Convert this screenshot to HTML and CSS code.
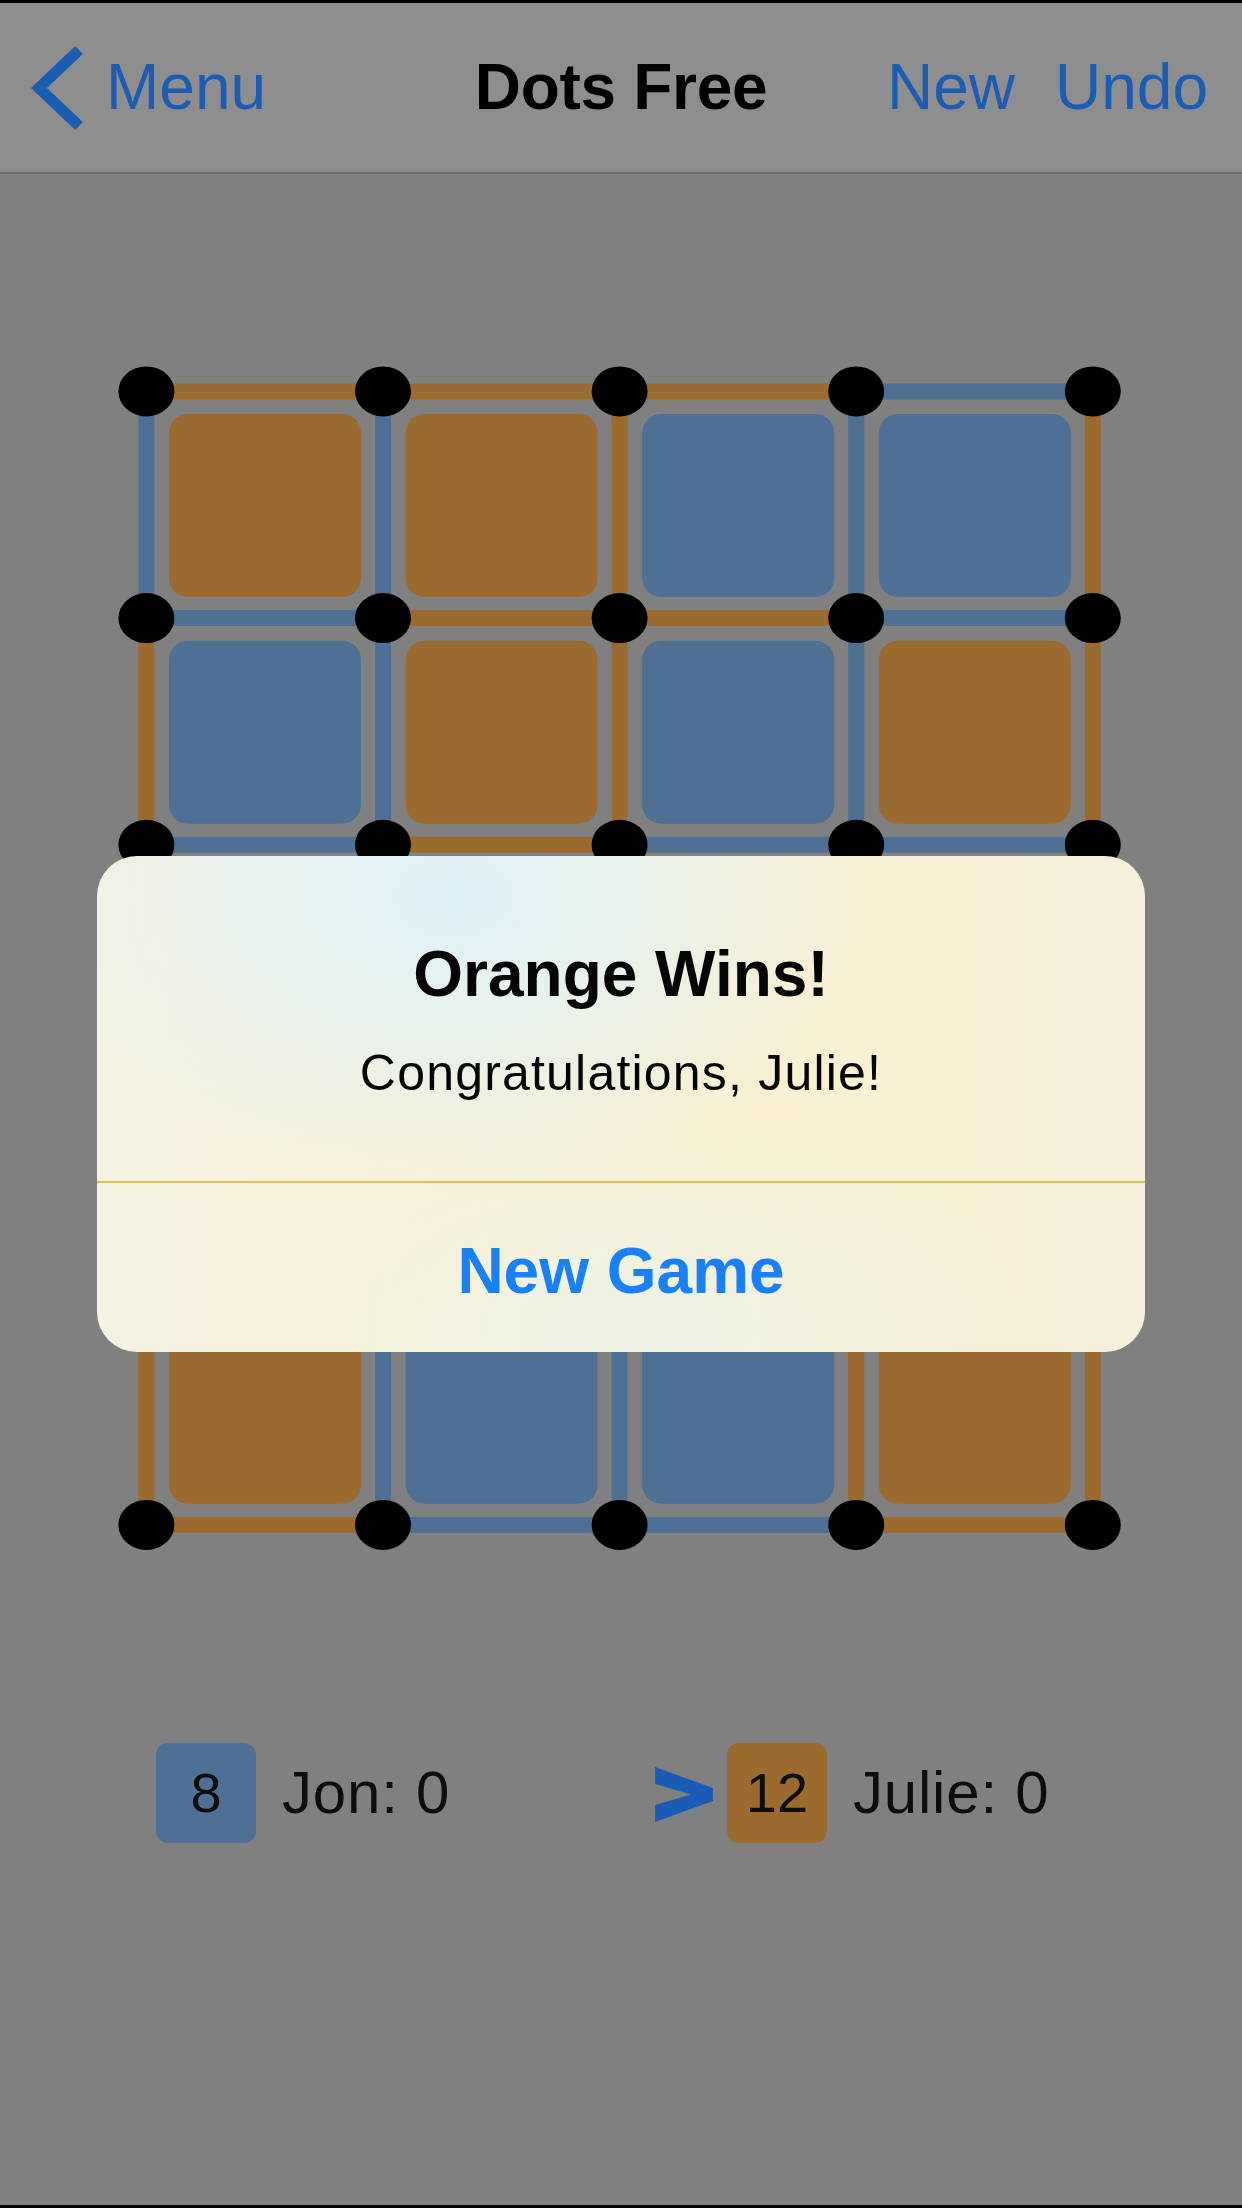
FILE: index.html
```html
<!DOCTYPE html>
<html lang="en">
<head>
<meta charset="utf-8">
<title>Dots Free</title>
<link rel="stylesheet" href="styles.css">
</head>
<body>
<div class="screen">
  <header class="navbar">
    <div class="nav-left">
      <svg class="back-chevron" viewBox="0 0 56 84" width="56" height="84" aria-hidden="true">
        <polyline points="49,4 9,42 49,80" fill="none" stroke="#1c5cb3" stroke-width="11" stroke-linejoin="miter"/>
      </svg>
      <span class="nav-link">Menu</span>
    </div>
    <div class="nav-title">Dots Free</div>
    <div class="nav-right">
      <span class="nav-link">New</span>
      <span class="nav-link">Undo</span>
    </div>
  </header>

  <svg class="board" viewBox="0 174 1242 1426" width="1242" height="1426" aria-hidden="true">
    <g stroke-width="16" stroke-linecap="butt">
      <!-- horizontal row 0 -->
      <line x1="146.4" y1="391.4" x2="383" y2="391.4" stroke="#9a6a2e"/>
      <line x1="383" y1="391.4" x2="619.6" y2="391.4" stroke="#9a6a2e"/>
      <line x1="619.6" y1="391.4" x2="856.2" y2="391.4" stroke="#9a6a2e"/>
      <line x1="856.2" y1="391.4" x2="1092.8" y2="391.4" stroke="#4e7095"/>
      <!-- vertical row 0 -->
      <line x1="146.4" y1="391.4" x2="146.4" y2="618.1" stroke="#4e7095"/>
      <line x1="383" y1="391.4" x2="383" y2="618.1" stroke="#4e7095"/>
      <line x1="619.6" y1="391.4" x2="619.6" y2="618.1" stroke="#9a6a2e"/>
      <line x1="856.2" y1="391.4" x2="856.2" y2="618.1" stroke="#4e7095"/>
      <line x1="1092.8" y1="391.4" x2="1092.8" y2="618.1" stroke="#9a6a2e"/>
      <!-- horizontal row 1 -->
      <line x1="146.4" y1="618.1" x2="383" y2="618.1" stroke="#4e7095"/>
      <line x1="383" y1="618.1" x2="619.6" y2="618.1" stroke="#9a6a2e"/>
      <line x1="619.6" y1="618.1" x2="856.2" y2="618.1" stroke="#9a6a2e"/>
      <line x1="856.2" y1="618.1" x2="1092.8" y2="618.1" stroke="#4e7095"/>
      <!-- vertical row 1 -->
      <line x1="146.4" y1="618.1" x2="146.4" y2="844.8" stroke="#9a6a2e"/>
      <line x1="383" y1="618.1" x2="383" y2="844.8" stroke="#4e7095"/>
      <line x1="619.6" y1="618.1" x2="619.6" y2="844.8" stroke="#9a6a2e"/>
      <line x1="856.2" y1="618.1" x2="856.2" y2="844.8" stroke="#4e7095"/>
      <line x1="1092.8" y1="618.1" x2="1092.8" y2="844.8" stroke="#9a6a2e"/>
      <!-- horizontal row 2 -->
      <line x1="146.4" y1="844.8" x2="383" y2="844.8" stroke="#4e7095"/>
      <line x1="383" y1="844.8" x2="619.6" y2="844.8" stroke="#9a6a2e"/>
      <line x1="619.6" y1="844.8" x2="856.2" y2="844.8" stroke="#4e7095"/>
      <line x1="856.2" y1="844.8" x2="1092.8" y2="844.8" stroke="#4e7095"/>
      <!-- vertical row 2 -->
      <line x1="146.4" y1="844.8" x2="146.4" y2="1071.5" stroke="#9a6a2e"/>
      <line x1="383" y1="844.8" x2="383" y2="1071.5" stroke="#9a6a2e"/>
      <line x1="619.6" y1="844.8" x2="619.6" y2="1071.5" stroke="#4e7095"/>
      <line x1="856.2" y1="844.8" x2="856.2" y2="1071.5" stroke="#9a6a2e"/>
      <line x1="1092.8" y1="844.8" x2="1092.8" y2="1071.5" stroke="#4e7095"/>
      <!-- horizontal row 3 -->
      <line x1="146.4" y1="1071.5" x2="383" y2="1071.5" stroke="#9a6a2e"/>
      <line x1="383" y1="1071.5" x2="619.6" y2="1071.5" stroke="#4e7095"/>
      <line x1="619.6" y1="1071.5" x2="856.2" y2="1071.5" stroke="#9a6a2e"/>
      <line x1="856.2" y1="1071.5" x2="1092.8" y2="1071.5" stroke="#9a6a2e"/>
      <!-- vertical row 3 -->
      <line x1="146.4" y1="1071.5" x2="146.4" y2="1298.2" stroke="#4e7095"/>
      <line x1="383" y1="1071.5" x2="383" y2="1298.2" stroke="#9a6a2e"/>
      <line x1="619.6" y1="1071.5" x2="619.6" y2="1298.2" stroke="#9a6a2e"/>
      <line x1="856.2" y1="1071.5" x2="856.2" y2="1298.2" stroke="#4e7095"/>
      <line x1="1092.8" y1="1071.5" x2="1092.8" y2="1298.2" stroke="#9a6a2e"/>
      <!-- horizontal row 4 -->
      <line x1="146.4" y1="1298.2" x2="383" y2="1298.2" stroke="#4e7095"/>
      <line x1="383" y1="1298.2" x2="619.6" y2="1298.2" stroke="#9a6a2e"/>
      <line x1="619.6" y1="1298.2" x2="856.2" y2="1298.2" stroke="#4e7095"/>
      <line x1="856.2" y1="1298.2" x2="1092.8" y2="1298.2" stroke="#9a6a2e"/>
      <!-- vertical row 4 -->
      <line x1="146.4" y1="1298.2" x2="146.4" y2="1524.9" stroke="#9a6a2e"/>
      <line x1="383" y1="1298.2" x2="383" y2="1524.9" stroke="#4e7095"/>
      <line x1="619.6" y1="1298.2" x2="619.6" y2="1524.9" stroke="#4e7095"/>
      <line x1="856.2" y1="1298.2" x2="856.2" y2="1524.9" stroke="#9a6a2e"/>
      <line x1="1092.8" y1="1298.2" x2="1092.8" y2="1524.9" stroke="#9a6a2e"/>
      <!-- horizontal row 5 -->
      <line x1="146.4" y1="1524.9" x2="383" y2="1524.9" stroke="#9a6a2e"/>
      <line x1="383" y1="1524.9" x2="619.6" y2="1524.9" stroke="#4e7095"/>
      <line x1="619.6" y1="1524.9" x2="856.2" y2="1524.9" stroke="#4e7095"/>
      <line x1="856.2" y1="1524.9" x2="1092.8" y2="1524.9" stroke="#9a6a2e"/>
    </g>
    <g>
      <!-- row 0 -->
      <rect x="169" y="414" width="192" height="183" rx="19" fill="#9a6a2e"/>
      <rect x="405.6" y="414" width="192" height="183" rx="19" fill="#9a6a2e"/>
      <rect x="642.2" y="414" width="192" height="183" rx="19" fill="#4e7095"/>
      <rect x="878.8" y="414" width="192" height="183" rx="19" fill="#4e7095"/>
      <!-- row 1 -->
      <rect x="169" y="640.7" width="192" height="183" rx="19" fill="#4e7095"/>
      <rect x="405.6" y="640.7" width="192" height="183" rx="19" fill="#9a6a2e"/>
      <rect x="642.2" y="640.7" width="192" height="183" rx="19" fill="#4e7095"/>
      <rect x="878.8" y="640.7" width="192" height="183" rx="19" fill="#9a6a2e"/>
      <!-- row 2 -->
      <rect x="169" y="867.4" width="192" height="183" rx="19" fill="#9a6a2e"/>
      <rect x="405.6" y="867.4" width="192" height="183" rx="19" fill="#9a6a2e"/>
      <rect x="642.2" y="867.4" width="192" height="183" rx="19" fill="#9a6a2e"/>
      <rect x="878.8" y="867.4" width="192" height="183" rx="19" fill="#4e7095"/>
      <!-- row 3 -->
      <rect x="169" y="1094.1" width="192" height="183" rx="19" fill="#9a6a2e"/>
      <rect x="405.6" y="1094.1" width="192" height="183" rx="19" fill="#4e7095"/>
      <rect x="642.2" y="1094.1" width="192" height="183" rx="19" fill="#9a6a2e"/>
      <rect x="878.8" y="1094.1" width="192" height="183" rx="19" fill="#9a6a2e"/>
      <!-- row 4 -->
      <rect x="169" y="1320.8" width="192" height="183" rx="19" fill="#9a6a2e"/>
      <rect x="405.6" y="1320.8" width="192" height="183" rx="19" fill="#4e7095"/>
      <rect x="642.2" y="1320.8" width="192" height="183" rx="19" fill="#4e7095"/>
      <rect x="878.8" y="1320.8" width="192" height="183" rx="19" fill="#9a6a2e"/>
    </g>
    <g fill="#000">
      <ellipse cx="146.4" cy="391.4" rx="28" ry="25"/>
      <ellipse cx="383" cy="391.4" rx="28" ry="25"/>
      <ellipse cx="619.6" cy="391.4" rx="28" ry="25"/>
      <ellipse cx="856.2" cy="391.4" rx="28" ry="25"/>
      <ellipse cx="1092.8" cy="391.4" rx="28" ry="25"/>
      <ellipse cx="146.4" cy="618.1" rx="28" ry="25"/>
      <ellipse cx="383" cy="618.1" rx="28" ry="25"/>
      <ellipse cx="619.6" cy="618.1" rx="28" ry="25"/>
      <ellipse cx="856.2" cy="618.1" rx="28" ry="25"/>
      <ellipse cx="1092.8" cy="618.1" rx="28" ry="25"/>
      <ellipse cx="146.4" cy="844.8" rx="28" ry="25"/>
      <ellipse cx="383" cy="844.8" rx="28" ry="25"/>
      <ellipse cx="619.6" cy="844.8" rx="28" ry="25"/>
      <ellipse cx="856.2" cy="844.8" rx="28" ry="25"/>
      <ellipse cx="1092.8" cy="844.8" rx="28" ry="25"/>
      <ellipse cx="146.4" cy="1071.5" rx="28" ry="25"/>
      <ellipse cx="383" cy="1071.5" rx="28" ry="25"/>
      <ellipse cx="619.6" cy="1071.5" rx="28" ry="25"/>
      <ellipse cx="856.2" cy="1071.5" rx="28" ry="25"/>
      <ellipse cx="1092.8" cy="1071.5" rx="28" ry="25"/>
      <ellipse cx="146.4" cy="1298.2" rx="28" ry="25"/>
      <ellipse cx="383" cy="1298.2" rx="28" ry="25"/>
      <ellipse cx="619.6" cy="1298.2" rx="28" ry="25"/>
      <ellipse cx="856.2" cy="1298.2" rx="28" ry="25"/>
      <ellipse cx="1092.8" cy="1298.2" rx="28" ry="25"/>
      <ellipse cx="146.4" cy="1524.9" rx="28" ry="25"/>
      <ellipse cx="383" cy="1524.9" rx="28" ry="25"/>
      <ellipse cx="619.6" cy="1524.9" rx="28" ry="25"/>
      <ellipse cx="856.2" cy="1524.9" rx="28" ry="25"/>
      <ellipse cx="1092.8" cy="1524.9" rx="28" ry="25"/>
    </g>
  </svg>

  <section class="scores">
    <div class="player player-blue">
      <span class="badge badge-blue">8</span>
      <span class="player-name">Jon: 0</span>
    </div>
    <div class="player player-orange">
      <svg class="turn-marker" viewBox="0 0 58 55" width="58" height="55" aria-hidden="true">
        <polygon points="0,0 58,21 58,34 0,55 0,38 36,27.5 0,17" fill="#1a5cb5"/>
      </svg>
      <span class="badge badge-orange">12</span>
      <span class="player-name">Julie: 0</span>
    </div>
  </section>

  <div class="bottom-edge"></div>

  <div class="alert" role="alertdialog">
    <div class="alert-body">
      <div class="alert-title">Orange Wins!</div>
      <div class="alert-message">Congratulations, Julie!</div>
    </div>
    <div class="alert-action">New Game</div>
  </div>
</div>
</body>
</html>
```

FILE: styles.css
```css
* {
  box-sizing: border-box;
}

html, body {
  margin: 0;
  padding: 0;
}

body {
  width: 1242px;
  height: 2208px;
  overflow: hidden;
  background: #808080;
  font-family: "Liberation Sans", Arial, sans-serif;
}

.screen {
  position: relative;
  width: 1242px;
  height: 2208px;
  display: flex;
  flex-direction: column;
  background: #808080;
}

.navbar {
  height: 174px;
  flex: none;
  background: #8e8e8e;
  border-top: 3px solid #050505;
  border-bottom: 2px solid #6c6c6c;
  display: grid;
  grid-template-columns: 1fr auto 1fr;
  align-items: center;
  padding-bottom: 2px;
}

.nav-left {
  display: flex;
  align-items: center;
  padding-left: 30px;
  gap: 20px;
}

.back-chevron {
  display: block;
  margin-top: 2px;
}

.nav-link {
  font-size: 64px;
  color: #1c5cb3;
  line-height: 1;
}

.nav-title {
  font-size: 64px;
  font-weight: bold;
  color: #000;
  line-height: 1;
  letter-spacing: -0.3px;
}

.nav-right {
  display: flex;
  justify-content: flex-end;
  align-items: center;
  gap: 40px;
  padding-right: 34px;
}

.board {
  display: block;
  flex: none;
}

.scores {
  flex: none;
  margin-top: 143px;
  height: 100px;
  display: flex;
  align-items: center;
  padding-left: 156px;
}

.player {
  display: flex;
  align-items: center;
}

.player-blue {
  width: 499px;
  gap: 26px;
}

.player-orange {
  gap: 0;
}

.turn-marker {
  display: block;
  margin-right: 14px;
  margin-top: 2px;
}

.player-orange .badge {
  margin-right: 26px;
}

.badge {
  width: 100px;
  height: 100px;
  border-radius: 12px;
  display: flex;
  align-items: center;
  justify-content: center;
  font-size: 56px;
  color: #0d0d0d;
  line-height: 1;
}

.badge-blue {
  background: #4f7095;
}

.badge-orange {
  background: #9a6a2e;
}

.player-name {
  font-size: 60px;
  color: #0d0d0d;
  line-height: 1;
  letter-spacing: 0.8px;
}

.bottom-edge {
  margin-top: auto;
  height: 3px;
  background: #050505;
  flex: none;
}

.alert {
  position: absolute;
  left: 97px;
  top: 856px;
  width: 1048px;
  height: 496px;
  border-radius: 40px;
  overflow: hidden;
  display: flex;
  flex-direction: column;
  background:
    radial-gradient(ellipse 420px 300px at 34% 8%, rgba(222, 242, 250, 1) 0%, rgba(222, 242, 250, 0.6) 45%, rgba(222, 242, 250, 0) 100%),
    radial-gradient(ellipse 380px 220px at 52% 95%, rgba(236, 243, 232, 0.9) 0%, rgba(236, 243, 232, 0) 100%),
    linear-gradient(90deg, #f4f2e2 0%, #f8f1d6 30%, #f9f0d0 60%, #f6f0da 100%);
}

.alert-body {
  height: 327px;
  flex: none;
  border-bottom: 2px solid #d8c558;
  padding-top: 78px;
  text-align: center;
}

.alert-title {
  font-size: 64px;
  font-weight: bold;
  color: #050505;
  line-height: 80px;
}

.alert-message {
  margin-top: 29px;
  font-size: 50px;
  color: #050505;
  line-height: 60px;
  letter-spacing: 1.2px;
}

.alert-action {
  flex: 1;
  display: flex;
  align-items: center;
  justify-content: center;
  font-size: 64px;
  font-weight: bold;
  color: #1a80f7;
  padding-top: 6px;
}
```
